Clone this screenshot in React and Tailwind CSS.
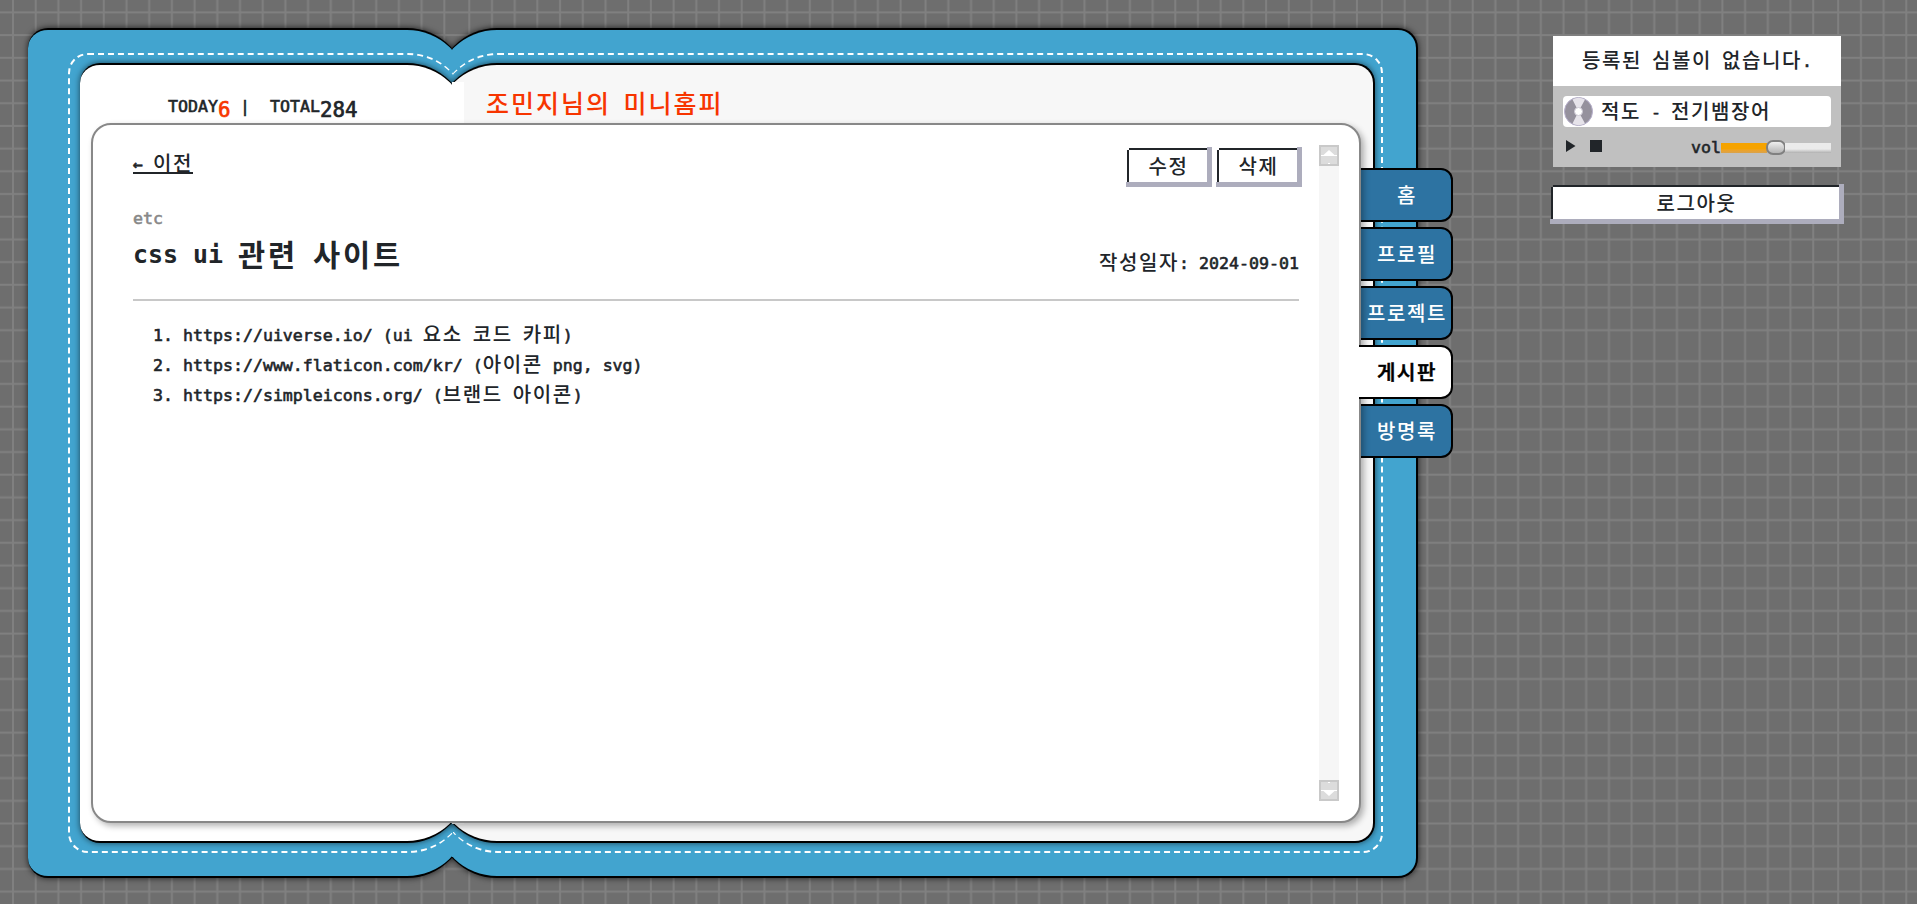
import React from "react";

const HANGUL = /([\u3131-\u318e\uac00-\ud7a3]+)/;

const SIZES = {
  md: {
    ko: "text-[20px] tracking-[1.6px] font-medium align-[-1px]",
    en: "text-[16.6px] [-webkit-text-stroke:0.6px]",
  },
  lg: {
    ko: "text-[25px] tracking-[2px] font-medium",
    en: "text-[20.76px] [-webkit-text-stroke:0.7px]",
  },
  xl: {
    ko: "text-[29.5px] tracking-[2.86px] font-bold align-[-3px]",
    en: "text-[24.9px] font-bold",
  },
};

/* Half-width latin cells mixed with full-width hangul cells. */
function Mono({ size = "md", children }) {
  const s = SIZES[size];
  return (
    <span className="whitespace-pre">
      {children.split(HANGUL).map((run, i) =>
        HANGUL.test(run) ? (
          <span key={i} className={"font-['Noto_Sans_CJK_KR','Noto_Sans',sans-serif] " + s.ko}>
            {run}
          </span>
        ) : run ? (
          <span key={i} className={"font-['DejaVu_Sans_Mono',monospace] " + s.en}>
            {run}
          </span>
        ) : null
      )}
    </span>
  );
}

function Backdrop() {
  const cols = Array.from({ length: 20 }, (_, i) => 12 + i * 22.7);
  const rows = Array.from({ length: 15 }, (_, i) => 11.4 + i * 22.7);
  return (
    <svg className="absolute inset-0 h-full w-full" aria-hidden="true">
      <defs>
        <pattern id="grid" width="456.3" height="348.8" patternUnits="userSpaceOnUse">
          <rect width="457" height="349" fill="#6e6e6e" />
          {cols.map((x) => (
            <rect key={x} x={x} y="0" width="2" height="349" fill="#808080" />
          ))}
          {rows.map((y) => (
            <rect key={y} x="0" y={y} width="457" height="2" fill="#808080" />
          ))}
        </pattern>
      </defs>
      <rect width="100%" height="100%" fill="url(#grid)" />
    </svg>
  );
}

function ActionButton({ label, className }) {
  return (
    <button className={"h-[40px] border-r-[5px] border-b-[5px] border-[#adadbd] pt-[3px] pl-[3px] " + className}>
      <span className="flex h-full w-full items-center justify-center bg-white pt-px pl-px leading-[20px] shadow-[-2px_0_0_#212529,0_-2px_0_#212529]">
        <Mono>{label}</Mono>
      </span>
    </button>
  );
}

const TABS = ["홈", "프로필", "프로젝트", "게시판", "방명록"];

function Tabs() {
  return (
    <nav className="relative col-start-1 row-start-1 mt-[140px] ml-[1333px] flex w-[92px] flex-col gap-[5px] self-start">
      {TABS.map((t) => (
        <a
          key={t}
          className={
            t === "게시판"
              ? "relative z-20 -ml-[2px] flex h-[54px] items-center justify-center rounded-r-[12px] border-y-2 border-r-2 border-black bg-white pl-[4px] leading-[20px] text-black [-webkit-text-stroke:0.6px]"
              : "flex h-[54px] items-center justify-center rounded-r-[12px] border-y-2 border-r-2 border-black bg-[#2d73a2] pl-[2px] leading-[20px] text-white"
          }
        >
          <Mono>{t}</Mono>
        </a>
      ))}
    </nav>
  );
}

function Arrow({ down }) {
  return (
    <svg className={down ? "block rotate-180" : "block"} width="20" height="21" viewBox="0 0 20 21">
      <rect width="20" height="21" fill="#c9c9c9" />
      <rect x="2" y="2" width="16" height="17" fill="#dcdcdc" />
      <path d="M10 5L15.5 10H18V11H2V10H4.500Z" fill="#fff" />
      <rect x="9" y="18" width="2" height="1" fill="#fff" />
    </svg>
  );
}

const LINKS = [
  "https://uiverse.io/ (ui 요소 코드 카피)",
  "https://www.flaticon.com/kr/ (아이콘 png, svg)",
  "https://simpleicons.org/ (브랜드 아이콘)",
];

function PostCard() {
  return (
    <main className="z-10 col-start-1 row-start-1 mt-[95px] ml-[63px] flex h-[700px] w-[1270px] self-start rounded-[20px] border-2 border-[#888] bg-white pt-[20px] pl-[40px] shadow-[3px_3px_6px_rgba(0,0,0,0.3)]">
      <article className="w-[1169px] pr-[3px]">
        <div className="-mr-[3px] flex h-[42px] items-start justify-between pt-[2px]">
          <a className="mt-[6px] block h-[21px] border-b-2 border-[#212529] leading-[20px]">
            <Mono>← 이전</Mono>
          </a>
          <div className="flex gap-[4px]">
            <ActionButton label="수정" className="w-[86px]" />
            <ActionButton label="삭제" className="w-[86px]" />
          </div>
        </div>
        <p className="mt-[19px] h-[25px] leading-[24px] text-[#888]">
          <Mono>etc</Mono>
        </p>
        <header className="flex h-[70px] justify-between border-b-2 border-[#c8c8c8]">
          <h1 className="pt-[4px] leading-[36px]">
            <Mono size="xl">css ui 관련 사이트</Mono>
          </h1>
          <p className="pt-[19px] leading-[24px]">
            <Mono>작성일자: 2024-09-01</Mono>
          </p>
        </header>
        <ol className="mt-[18px] pl-[20px]">
          {LINKS.map((l, i) => (
            <li key={l} className="h-[30px] leading-[30px]">
              <Mono>{`${i + 1}. ${l}`}</Mono>
            </li>
          ))}
        </ol>
      </article>
      <div className="ml-[17px] flex h-[656px] w-[20px] flex-col justify-between bg-[#f6f6f6]">
        <Arrow />
        <Arrow down />
      </div>
    </main>
  );
}

function Book() {
  return (
    <div className="relative grid h-[850px] w-[1425px] shrink-0">
      <div className="col-start-1 row-start-1 flex h-[850px] w-[1390px] drop-shadow-[0_0_3px_rgba(0,0,0,0.75)]">
        <div className="w-[424px] overflow-hidden">
          <div className="h-full w-[439px] rounded-l-[20px] rounded-r-[60px] border-y-2 border-black bg-[#42a4cf]" />
        </div>
        <div className="flex-1 overflow-hidden">
          <div className="-ml-[15px] h-full rounded-l-[60px] rounded-r-[20px] border-y-2 border-r-2 border-black bg-[#42a4cf]" />
        </div>
      </div>
      <div className="relative col-start-1 row-start-1 mt-[35px] ml-[52px] flex h-[780px] w-[1295px] drop-shadow-[0_0_3px_rgba(0,0,0,0.6)]">
        <div className="w-[372px] overflow-hidden">
          <div className="h-full w-[387px] rounded-l-[20px] rounded-r-[60px] border-y-2 border-black bg-white" />
        </div>
        <div className="flex-1 overflow-hidden">
          <div className="-ml-[15px] h-full rounded-l-[60px] rounded-r-[20px] border-y-2 border-r-2 border-black bg-[#f7f7f7]" />
        </div>
      </div>
      <div className="relative col-start-1 row-start-1 mt-[25px] ml-[40px] flex h-[800px] w-[1315px]">
        <div className="w-[385px] overflow-hidden">
          <div className="h-full w-[400px] rounded-l-[20px] rounded-r-[60px] border-2 border-r-0 border-dashed border-white" />
        </div>
        <div className="flex-1 overflow-hidden">
          <div className="-ml-[15px] h-full rounded-l-[60px] rounded-r-[20px] border-2 border-l-0 border-dashed border-white" />
        </div>
      </div>
      <div className="relative col-start-1 row-start-1 mt-[54px] ml-[424px] h-[742px] w-[12px] bg-white" />
      <div className="relative col-start-1 row-start-1 mt-[53px] ml-[140px] flex h-[42px] self-start">
        <div className="flex h-[42px] w-[318px] items-start leading-[24px]">
          <span className="w-[50px] pt-[13px]"><Mono>TODAY</Mono></span>
          <span className="w-[22px] pt-[17px] text-[#f73500]"><Mono size="lg">6</Mono></span>
          <span className="w-[30px] pt-[13px]"><Mono>|</Mono></span>
          <span className="w-[50px] pt-[13px]"><Mono>TOTAL</Mono></span>
          <span className="pt-[17px]"><Mono size="lg">284</Mono></span>
        </div>
        <h2 className="pt-[6px] leading-[30px] text-[#f73500]">
          <Mono size="lg">조민지님의 미니홈피</Mono>
        </h2>
      </div>
      <Tabs />
      <PostCard />
    </div>
  );
}

function Disc() {
  return (
    <svg width="31" height="31" viewBox="0 0 31 31">
      <circle cx="15.500" cy="15.500" r="14" fill="#95919d" stroke="#b5aecb" strokeWidth="1" />
      <path d="M15.500 15.500L9.500 3.500Q15.500 0 22 3.500ZM15.500 15.500L9.500 27.500Q15.500 31 22 27.500Z" fill="#e6e3ea" />
      <circle cx="15.500" cy="15.500" r="4" fill="#fff" stroke="#cbc7d3" strokeWidth="1" />
    </svg>
  );
}

function Sidebar() {
  return (
    <aside className="relative mt-[8px] ml-[97px] w-[294px] shrink-0">
      <div className="ml-[3px] w-[288px]">
        <div className="flex h-[50px] items-center justify-center bg-white leading-[24px]">
          <Mono>등록된 심볼이 없습니다.</Mono>
        </div>
        <div className="h-[81px] bg-[#c0c0c0] px-[10px] pt-[10px]">
          <div className="flex h-[31px] items-center gap-[7px] rounded-[4px] bg-white leading-[24px]">
            <Disc />
            <Mono>적도 - 전기뱀장어</Mono>
          </div>
          <div className="flex h-[38px] items-center">
            <svg width="40" height="12" viewBox="0 0 40 12" fill="#212529">
              <path d="M3 0V12L12.500 6Z" />
              <rect x="27" y="0" width="12" height="12" />
            </svg>
            <span className="ml-[88px] w-[30px] pt-[2px] leading-[20px]">
              <Mono>vol</Mono>
            </span>
            <div className="mt-[3px] flex h-[15px] w-[110px] items-center">
              <div className="h-[10px] w-[46px] bg-linear-to-b from-[#f5a300] from-60% to-[#d9a24a]" />
              <div className="-mx-px h-[15px] w-[20px] shrink-0 rounded-[7px] border-2 border-[#808080] bg-linear-to-b from-[#efefef] to-[#b4b4b4]" />
              <div className="h-[10px] flex-1 bg-linear-to-b from-[#ebebeb] from-60% to-[#b0b0b0]" />
            </div>
          </div>
        </div>
      </div>
      <ActionButton label="로그아웃" className="mt-[17px] w-[294px]" />
    </aside>
  );
}

export default function App() {
  return (
    <div className="relative flex h-[904px] w-full items-start overflow-hidden bg-[#6e6e6e] pt-[28px] pl-[28px] text-[#212529]">
      <Backdrop />
      <Book />
      <Sidebar />
    </div>
  );
}
